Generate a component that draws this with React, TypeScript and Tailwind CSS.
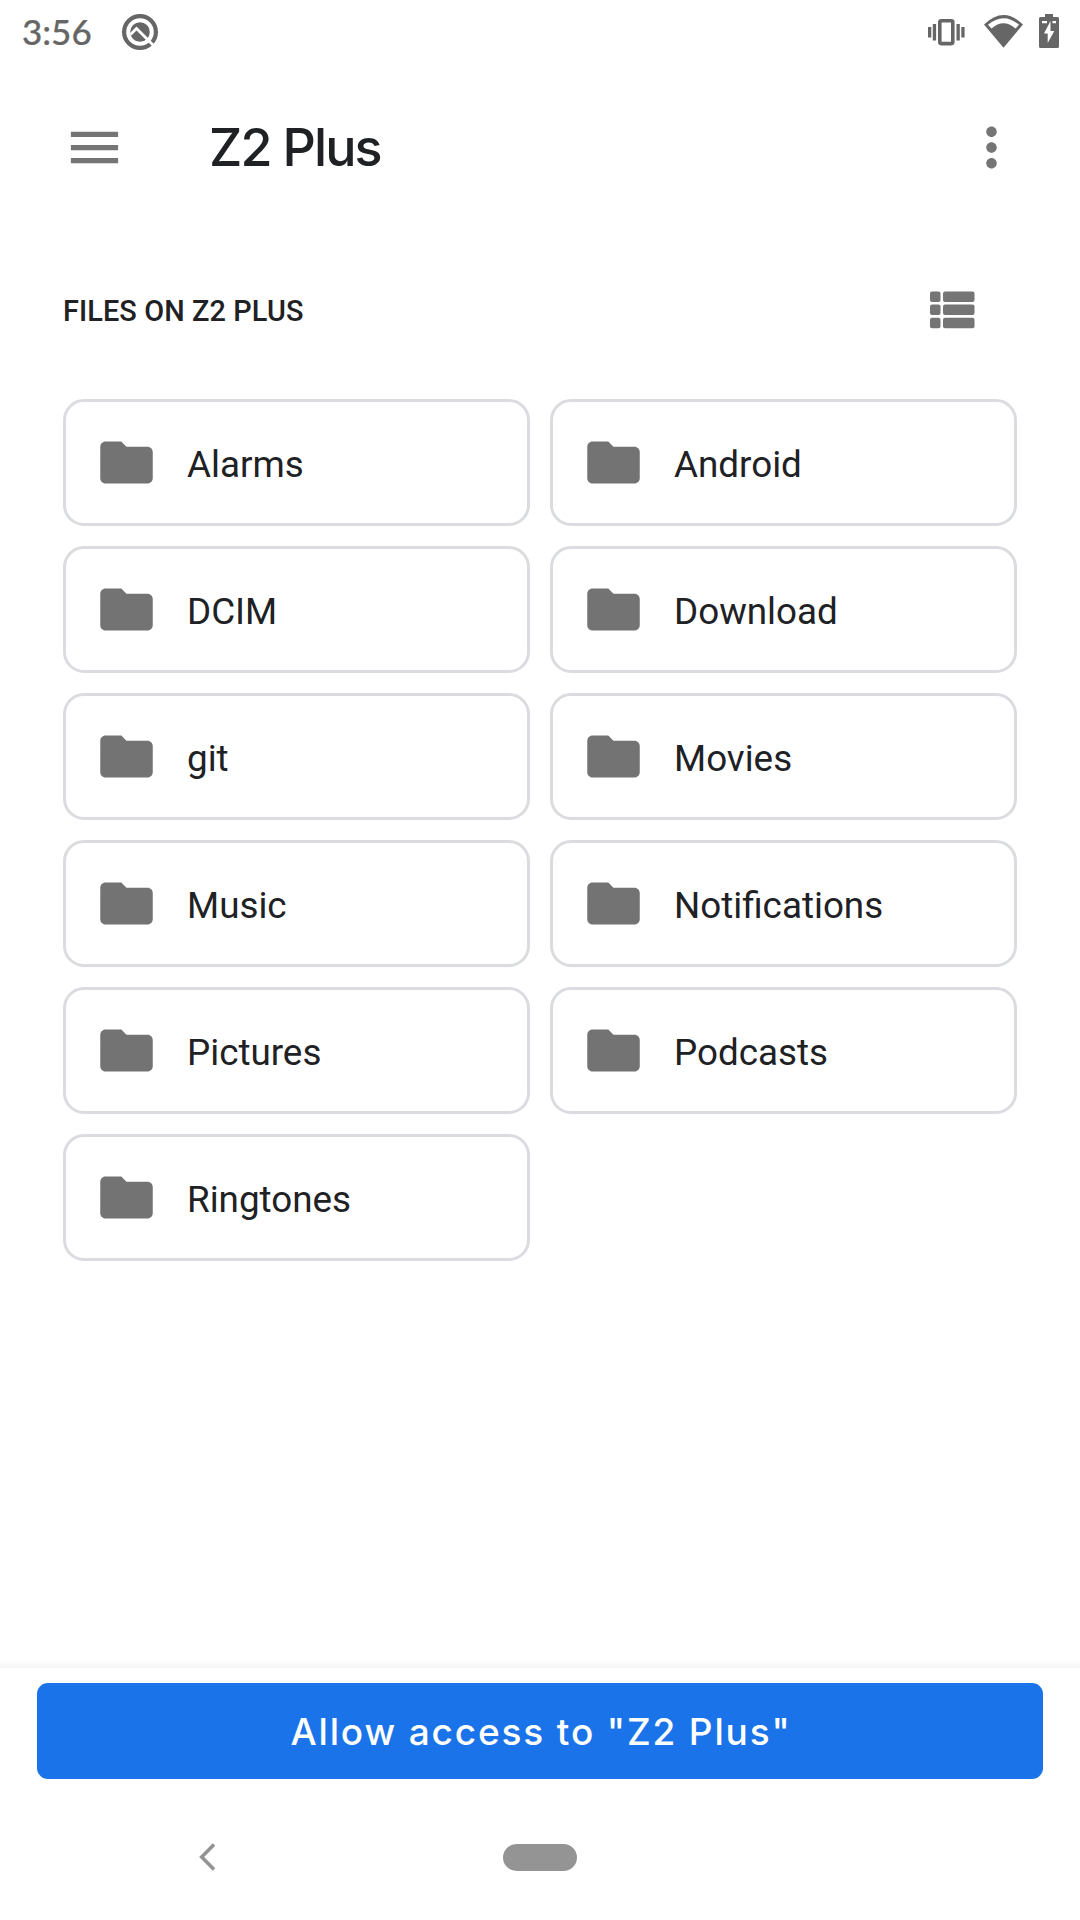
import React from "react";

const folders = [
  "Alarms",
  "Android",
  "DCIM",
  "Download",
  "git",
  "Movies",
  "Music",
  "Notifications",
  "Pictures",
  "Podcasts",
  "Ringtones",
];

function StatusBar() {
  return (
    <div className="flex h-[63px] shrink-0 items-center pl-[22px] pr-[21px] text-[#666666]">
      <span className="w-[71px] font-['Lato',sans-serif] text-[35px] leading-[63px] font-medium whitespace-nowrap [-webkit-text-stroke:0.2px_#666666]">3:56</span>
      <svg className="ml-[28px] h-[38px] w-[38px]" viewBox="0 0 38 38" fill="none">
        <circle cx="19" cy="19" r="15.9" stroke="currentColor" strokeWidth="4.200" />
        <circle cx="19" cy="19" r="9.800" fill="currentColor" />
        <path d="M9.500 21.500L15.500 15.500L34 34" stroke="#fff" strokeWidth="2.800" />
      </svg>
      <div className="ml-auto flex items-center">
        <svg className="h-[28px] w-[37px]" viewBox="0 0 37 28" fill="currentColor">
          <path d="M0 9h3.300v10.500H0zM4.800 6h3.300v16.500H4.800zM28.500 6h3.300v16.500h-3.300zM33.300 9h3.300v10.500h-3.300z" />
          <rect x="11.800" y="2.800" width="13" height="22.800" rx="1.500" fill="none" stroke="currentColor" strokeWidth="3.600" />
        </svg>
        <svg className="mt-[-1px] ml-[19px] h-[33px] w-[39px]" viewBox="0 0 39 33">
          <path d="M0 9.500Q19.500-9.500 39 9.500L19.500 32.700z" fill="currentColor" />
          <path d="M4 9.800Q19.500-3.400 35 9.800L31.500 13.600Q19.500 2.800 7.500 13.600z" fill="#fff" />
        </svg>
        <svg className="mt-[-1px] ml-[16px] h-[34px] w-[20px]" viewBox="0 0 20 34">
          <path d="M6 0h8v3h4.500q1.500 0 1.500 1.500v28q0 1.500-1.500 1.500h-17Q0 34 0 32.500v-28Q0 3 1.500 3H6z" fill="currentColor" />
          <path d="M3 7h5v2.200H3zM13.500 7H17v2.200h-3.500zM11.500 7v10h3.800L8.700 29v-9.500H5z" fill="#fff" />
        </svg>
      </div>
    </div>
  );
}

function Toolbar() {
  return (
    <header className="flex h-[168px] shrink-0 items-center pl-[63px] pr-[57px]">
      <svg className="h-[63px] w-[63px] text-[#757575]" viewBox="0 0 24 24" fill="currentColor">
        <path d="M3 18h18v-2H3v2zm0-5h18v-2H3v2zm0-7v2h18V6H3z" />
      </svg>
      <h1 className="mt-[2px] ml-[83px] font-['Inter',sans-serif] text-[52px] leading-none font-medium tracking-[-1.900px] whitespace-nowrap text-[#202124]">Z2 Plus</h1>
      <svg className="ml-auto h-[63px] w-[63px] text-[#757575]" viewBox="0 0 24 24" fill="currentColor">
        <path d="M12 8c1.100 0 2-.9 2-2s-.9-2-2-2-2 .9-2 2 .9 2 2 2zm0 2c-1.100 0-2 .9-2 2s.9 2 2 2 2-.9 2-2-.9-2-2-2zm0 6c-1.100 0-2 .9-2 2s.9 2 2 2 2-.9 2-2-.9-2-2-2z" />
      </svg>
    </header>
  );
}

function FolderCard({ name }: { name: string }) {
  return (
    <div className="flex h-[127px] items-center rounded-[21px] border-[3px] border-[#dadce0] pl-[29px]">
      <svg className="h-[63px] w-[63px] shrink-0 text-[#737373]" viewBox="0 0 24 24" fill="currentColor">
        <path d="M10 4H4c-1.100 0-1.990.9-1.990 2L2 18c0 1.100.9 2 2 2h16c1.100 0 2-.9 2-2V8c0-1.100-.9-2-2-2h-8l-2-2z" />
      </svg>
      <span className="mt-[5px] ml-[29px] text-[36.800px] leading-[44px] text-[#202124]">{name}</span>
    </div>
  );
}

export default function App() {
  return (
    <div className="flex h-[1920px] w-[1080px] flex-col overflow-hidden bg-white font-['Roboto',sans-serif]">
      <StatusBar />
      <Toolbar />
      <main className="flex-1 px-[63px]">
        <div className="flex h-[168px] items-center justify-between pr-[42px]">
          <h2 className="mt-[-8px] text-[28.875px] leading-[34px] font-medium tracking-[0.100px] text-[#202124]">FILES ON Z2 PLUS</h2>
          <svg className="mt-[-11px] h-[38px] w-[45px] text-[#757575]" viewBox="0 0 45 38" fill="currentColor">
            {[0.5, 13.6, 26.7].map((y) => (
              <g key={y}>
                <rect x="0" y={y} width="10.500" height="10.500" rx="2" />
                <rect x="13" y={y} width="31.500" height="10.500" rx="2" />
              </g>
            ))}
          </svg>
        </div>
        <div className="grid grid-cols-[467px_467px] gap-[20px]">
          {folders.map((name) => (
            <FolderCard key={name} name={name} />
          ))}
        </div>
      </main>
      <div className="h-[8px] shrink-0 bg-linear-to-b from-white to-[#f5f5f5]" />
      <footer className="h-[126px] shrink-0 px-[37px] pt-[15px]">
        <button className="flex h-[96px] w-full items-center justify-center rounded-[11px] bg-[#1a73e8] pl-[2px] font-['Inter',sans-serif] text-[37px] leading-none font-medium tracking-[1.850px] whitespace-nowrap text-white">
          Allow access to "Z2 Plus"
        </button>
      </footer>
      <nav className="flex h-[126px] shrink-0 items-center">
        <svg className="ml-[199px] h-[28px] w-[18px]" viewBox="0 0 18 28" fill="none" stroke="#949494" strokeWidth="3.600">
          <path d="M15 1.500L2.700 14L15 26.500" />
        </svg>
        <div className="ml-[286px] h-[27px] w-[74px] rounded-full bg-[#949494]" />
      </nav>
    </div>
  );
}
